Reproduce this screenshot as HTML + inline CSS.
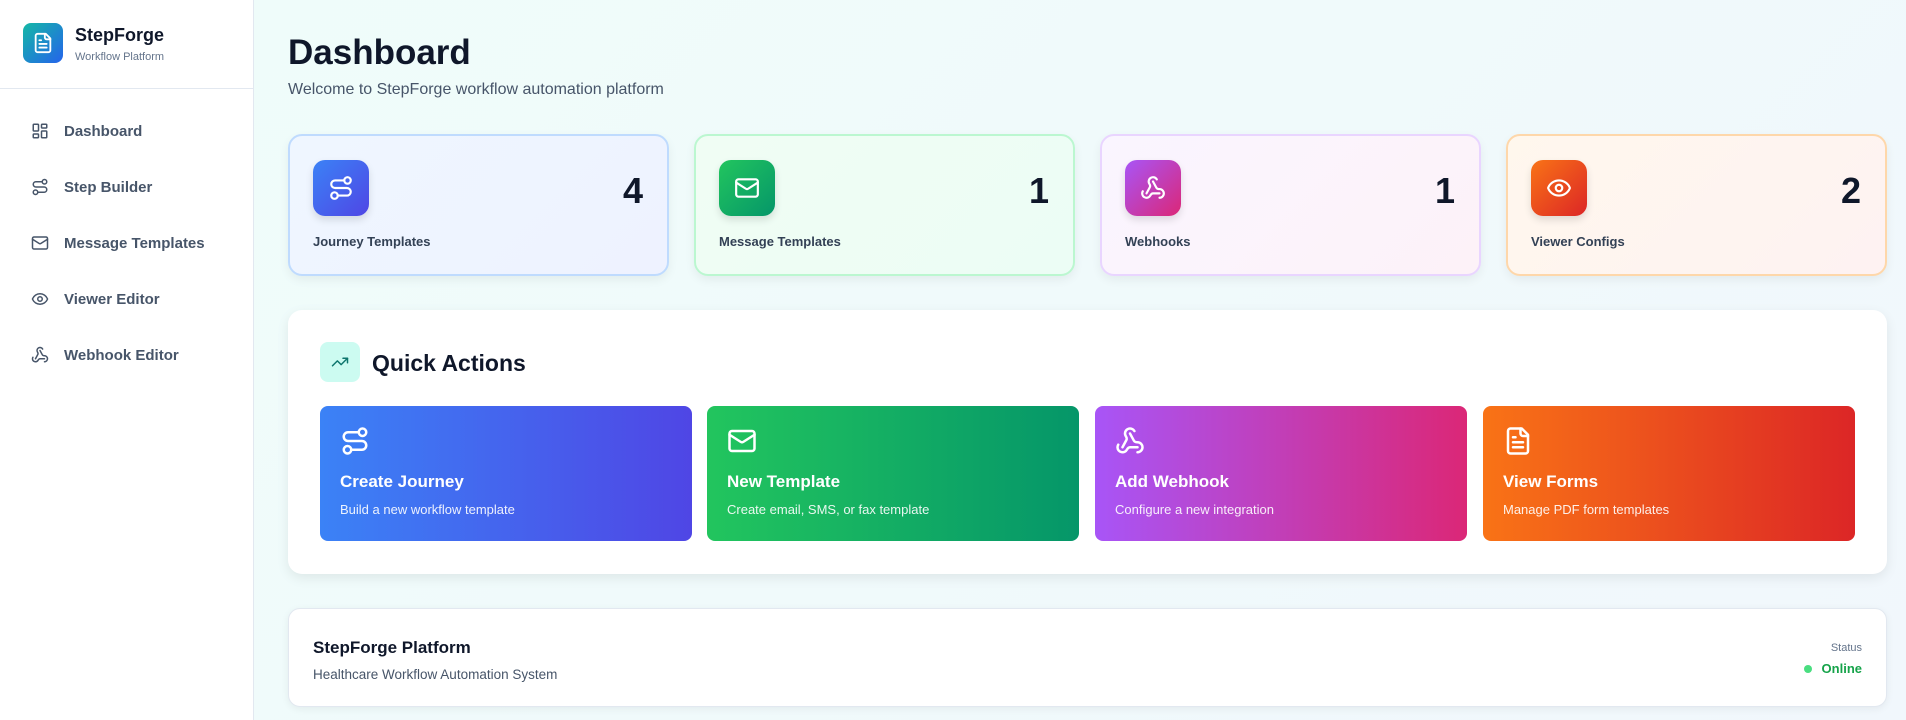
<!DOCTYPE html>
<html><head><meta charset="utf-8"><style>
*{box-sizing:border-box;margin:0;padding:0}
body{width:1906px;height:720px;overflow:hidden;font-family:"Liberation Sans",sans-serif;background:linear-gradient(135deg,#effdfa,#f1f7fc);position:relative;color:#0f172a}
svg{fill:none;stroke:currentColor;stroke-width:2;stroke-linecap:round;stroke-linejoin:round}
.side{position:absolute;left:0;top:0;width:254px;height:720px;background:#fff;border-right:1px solid #e2e8f0}
.logo{position:absolute;left:23px;top:23px;width:40px;height:40px;border-radius:8px;background:linear-gradient(135deg,#14b8a6,#2563eb);color:#fff;display:flex;align-items:center;justify-content:center}
.brand{position:absolute;left:75px;top:25px;font-weight:bold;font-size:18px}
.sub{position:absolute;left:75px;top:51px;font-size:11px;color:#64748b}
.hr{position:absolute;left:0;top:88px;width:254px;border-top:1px solid #e2e8f0}
.nav{position:absolute;left:31px;display:flex;align-items:center;font-size:15px;font-weight:bold;color:#475569}
.nav svg{width:18px;height:18px;margin-right:15px;color:#475569}
h1{position:absolute;left:288px;top:33px;font-size:35px;font-weight:bold}
.wel{position:absolute;left:288px;top:81px;font-size:16px;color:#475569}
.stat{position:absolute;top:134px;width:381px;height:142px;border-radius:14px;border:2px solid;box-shadow:0 4px 10px rgba(0,0,0,.06)}
.stat .ic{position:absolute;left:23px;top:24px;width:56px;height:56px;border-radius:12px;display:flex;align-items:center;justify-content:center;color:#fff;box-shadow:0 4px 8px rgba(0,0,0,.12)}
.stat .ic svg{width:26px;height:26px}
.stat .n{position:absolute;right:24px;top:34px;font-size:36px;font-weight:bold}
.stat .l{position:absolute;left:23px;top:98px;font-size:13px;font-weight:bold;color:#334155}
.qa{position:absolute;left:288px;top:310px;width:1599px;height:264px;background:#fff;border-radius:14px;box-shadow:0 4px 12px rgba(0,0,0,.08)}
.qa .hi{position:absolute;left:32px;top:32px;width:40px;height:40px;border-radius:8px;background:#ccfbf1;color:#0f766e;display:flex;align-items:center;justify-content:center}
.qa h2{position:absolute;left:84px;top:40px;font-size:23px;font-weight:bold}
.act{position:absolute;top:96px;width:372px;height:135px;border-radius:8px;color:#fff}
.act svg{position:absolute;left:20px;top:20px;width:30px;height:30px}
.act b{position:absolute;left:20px;top:66px;font-size:17px}
.act span{position:absolute;left:20px;top:96px;font-size:13px;opacity:.9}
.ft{position:absolute;left:288px;top:608px;width:1599px;height:99px;background:#fff;border-radius:12px;border:1px solid #e2e8f0;box-shadow:0 2px 8px rgba(0,0,0,.06)}
</style></head><body>
<div class="side">
<div class="logo"><svg width="22" height="22" viewBox="0 0 24 24"><path d="M15 2H6a2 2 0 0 0-2 2v16a2 2 0 0 0 2 2h12a2 2 0 0 0 2-2V7Z"/><path d="M14 2v4a2 2 0 0 0 2 2h4"/><path d="M10 9H8M16 13H8M16 17H8"/></svg></div>
<div class="brand">StepForge</div><div class="sub">Workflow Platform</div>
<div class="hr"></div>
<div class="nav" style="top:122px"><svg viewBox="0 0 24 24"><rect x="3" y="3" width="7" height="9" rx="1"/><rect x="14" y="3" width="7" height="5" rx="1"/><rect x="14" y="12" width="7" height="9" rx="1"/><rect x="3" y="16" width="7" height="5" rx="1"/></svg>Dashboard</div>
<div class="nav" style="top:178px"><svg viewBox="0 0 24 24"><circle cx="6" cy="19" r="3"/><path d="M9 19h8.5a3.5 3.5 0 0 0 0-7h-11a3.5 3.5 0 0 1 0-7H15"/><circle cx="18" cy="5" r="3"/></svg>Step Builder</div>
<div class="nav" style="top:234px"><svg viewBox="0 0 24 24"><rect x="2" y="4" width="20" height="16" rx="2"/><path d="m22 7-8.970 5.7a1.94 1.94 0 0 1-2.06 0L2 7"/></svg>Message Templates</div>
<div class="nav" style="top:290px"><svg viewBox="0 0 24 24"><path d="M2.062 12.348a1 1 0 0 1 0-.696 10.75 10.75 0 0 1 19.876 0 1 1 0 0 1 0 .696 10.75 10.75 0 0 1-19.876 0"/><circle cx="12" cy="12" r="3"/></svg>Viewer Editor</div>
<div class="nav" style="top:346px"><svg viewBox="0 0 24 24"><path d="M18 16.98h-5.99c-1.1 0-1.95.94-2.48 1.9A4 4 0 0 1 2 17c.01-.7.2-1.4.57-2"/><path d="m6 17 3.13-5.78c.53-.97.1-2.18-.5-3.1a4 4 0 1 1 6.89-4.06"/><path d="m12 6 3.13 5.73C15.66 12.7 16.9 13 18 13a4 4 0 0 1 0 8"/></svg>Webhook Editor</div>
</div>
<h1>Dashboard</h1>
<div class="wel">Welcome to StepForge workflow automation platform</div>

<div class="stat" style="left:288px;border-color:#bfdbfe;background:linear-gradient(135deg,#eff6ff,#eef2ff)"><div class="ic" style="background:linear-gradient(135deg,#3b82f6,#4f46e5)"><svg viewBox="0 0 24 24"><circle cx="6" cy="19" r="3"/><path d="M9 19h8.5a3.5 3.5 0 0 0 0-7h-11a3.5 3.5 0 0 1 0-7H15"/><circle cx="18" cy="5" r="3"/></svg></div><div class="n">4</div><div class="l">Journey Templates</div></div>
<div class="stat" style="left:694px;border-color:#bbf7d0;background:linear-gradient(135deg,#f0fdf4,#ecfdf5)"><div class="ic" style="background:linear-gradient(135deg,#22c55e,#059669)"><svg viewBox="0 0 24 24"><rect x="2" y="4" width="20" height="16" rx="2"/><path d="m22 7-8.97 5.7a1.94 1.94 0 0 1-2.06 0L2 7"/></svg></div><div class="n">1</div><div class="l">Message Templates</div></div>
<div class="stat" style="left:1100px;border-color:#e9d5ff;background:linear-gradient(135deg,#faf5ff,#fdf2f8)"><div class="ic" style="background:linear-gradient(135deg,#a855f7,#db2777)"><svg viewBox="0 0 24 24"><path d="M18 16.98h-5.99c-1.1 0-1.95.94-2.48 1.9A4 4 0 0 1 2 17c.01-.7.2-1.4.57-2"/><path d="m6 17 3.13-5.78c.53-.97.1-2.18-.5-3.1a4 4 0 1 1 6.89-4.06"/><path d="m12 6 3.13 5.73C15.66 12.7 16.9 13 18 13a4 4 0 0 1 0 8"/></svg></div><div class="n">1</div><div class="l">Webhooks</div></div>
<div class="stat" style="left:1506px;border-color:#fed7aa;background:linear-gradient(135deg,#fff7ed,#fef2f2)"><div class="ic" style="background:linear-gradient(135deg,#f97316,#dc2626)"><svg viewBox="0 0 24 24"><path d="M2.062 12.348a1 1 0 0 1 0-.696 10.75 10.75 0 0 1 19.876 0 1 1 0 0 1 0 .696 10.75 10.75 0 0 1-19.876 0"/><circle cx="12" cy="12" r="3"/></svg></div><div class="n">2</div><div class="l">Viewer Configs</div></div>

<div class="qa">
<div class="hi"><svg width="18" height="18" viewBox="0 0 24 24"><polyline points="22 7 13.5 15.5 8.5 10.5 2 17"/><polyline points="16 7 22 7 22 13"/></svg></div>
<h2>Quick Actions</h2>
<div class="act" style="left:32px;background:linear-gradient(90deg,#3b82f6,#4f46e5)"><svg viewBox="0 0 24 24"><circle cx="6" cy="19" r="3"/><path d="M9 19h8.5a3.5 3.5 0 0 0 0-7h-11a3.5 3.5 0 0 1 0-7H15"/><circle cx="18" cy="5" r="3"/></svg><b>Create Journey</b><span>Build a new workflow template</span></div>
<div class="act" style="left:419px;background:linear-gradient(90deg,#22c55e,#059669)"><svg viewBox="0 0 24 24"><rect x="2" y="4" width="20" height="16" rx="2"/><path d="m22 7-8.97 5.7a1.94 1.94 0 0 1-2.06 0L2 7"/></svg><b>New Template</b><span>Create email, SMS, or fax template</span></div>
<div class="act" style="left:807px;background:linear-gradient(90deg,#a855f7,#db2777)"><svg viewBox="0 0 24 24"><path d="M18 16.98h-5.99c-1.1 0-1.95.94-2.48 1.9A4 4 0 0 1 2 17c.01-.7.2-1.4.57-2"/><path d="m6 17 3.13-5.78c.53-.97.1-2.18-.5-3.1a4 4 0 1 1 6.89-4.06"/><path d="m12 6 3.13 5.73C15.66 12.7 16.9 13 18 13a4 4 0 0 1 0 8"/></svg><b>Add Webhook</b><span>Configure a new integration</span></div>
<div class="act" style="left:1195px;background:linear-gradient(90deg,#f97316,#dc2626)"><svg viewBox="0 0 24 24"><path d="M15 2H6a2 2 0 0 0-2 2v16a2 2 0 0 0 2 2h12a2 2 0 0 0 2-2V7Z"/><path d="M14 2v4a2 2 0 0 0 2 2h4"/><path d="M10 9H8M16 13H8M16 17H8"/></svg><b>View Forms</b><span>Manage PDF form templates</span></div>
</div>

<div class="ft">
<div style="position:absolute;left:24px;top:29px;font-size:17px;font-weight:bold">StepForge Platform</div>
<div style="position:absolute;left:24px;top:58px;font-size:13.5px;color:#475569">Healthcare Workflow Automation System</div>
<div style="position:absolute;right:24px;top:33px;font-size:11px;color:#64748b">Status</div>
<div style="position:absolute;right:24px;top:52px;font-size:13px;font-weight:bold;color:#16a34a;display:flex;align-items:center"><span style="width:8px;height:8px;border-radius:50%;background:#4ade80;margin-right:10px"></span>Online</div>
</div>
</body></html>
